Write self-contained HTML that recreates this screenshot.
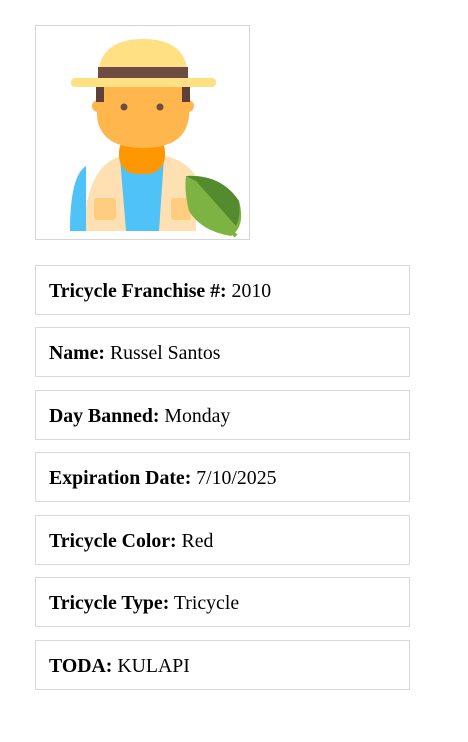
<!DOCTYPE html>
<html><head><style>
body{margin:0;background:#fff;font-family:"Liberation Serif",serif;}
.av{position:absolute;left:35px;top:25px;width:213px;height:213px;border:1px solid #d6d6d6;}
.c{position:absolute;left:35px;border:1px solid #d9d9d9;font-size:19.8px;line-height:51px;padding-left:13px;box-sizing:border-box;width:375px;height:50px;color:#000}
</style></head><body>
<div class="av"><svg width="213" height="213" viewBox="0 0 213 213">
<path d="M48 205 Q50 140 85 130 L130 130 Q150 135 160 150 L160 205 Z" fill="#ffe0b2"/>
<path d="M34 205 Q34 150 50 140 L50 205 Z" fill="#4fc3f7"/>
<path d="M84 132 L128 132 L123 205 L90 205 Z" fill="#4fc3f7"/>
<rect x="83" y="108" width="46" height="40" rx="18" fill="#ff9800"/>
<rect x="58" y="172" width="22" height="22" rx="3" fill="#ffcc80"/>
<rect x="135" y="172" width="20" height="22" rx="3" fill="#ffcc80"/>
<circle cx="62" cy="80" r="6" fill="#ffb74d"/><circle cx="152" cy="80" r="6" fill="#ffb74d"/>
<path d="M61 56 L153 56 L153 90 Q150 122 107 122 Q64 122 61 90 Z" fill="#ffb74d"/>
<rect x="60" y="60" width="8" height="16" fill="#5d4037"/><rect x="146" y="60" width="8" height="16" fill="#5d4037"/>
<circle cx="88" cy="81" r="3.5" fill="#6d4c41"/><circle cx="124" cy="81" r="3.5" fill="#6d4c41"/>
<path d="M62 52 Q62 13 107 13 Q152 13 152 52 Z" fill="#ffe082"/>
<rect x="62" y="41" width="90" height="11" fill="#6d4c41"/>
<rect x="35" y="52" width="145" height="9" rx="4" fill="#ffe082"/>
<path d="M150 150 Q185 148 203 175 Q210 200 195 210 Q165 205 153 185 Q148 165 150 150 Z" fill="#7cb342"/>
<path d="M150 150 Q185 148 203 175 Q205 190 200 200 L160 155 Z" fill="#558b2f"/>
<path d="M188 198 L200 210" stroke="#7cb342" stroke-width="4"/>
</svg></div>
<div class="c" style="top:265px"><b>Tricycle Franchise #:</b> 2010</div>
<div class="c" style="top:327px"><b>Name:</b> Russel Santos</div>
<div class="c" style="top:390px"><b>Day Banned:</b> Monday</div>
<div class="c" style="top:452px"><b>Expiration Date:</b> 7/10/2025</div>
<div class="c" style="top:515px"><b>Tricycle Color:</b> Red</div>
<div class="c" style="top:577px"><b>Tricycle Type:</b> Tricycle</div>
<div class="c" style="top:640px"><b>TODA:</b> KULAPI</div>
</body></html>
